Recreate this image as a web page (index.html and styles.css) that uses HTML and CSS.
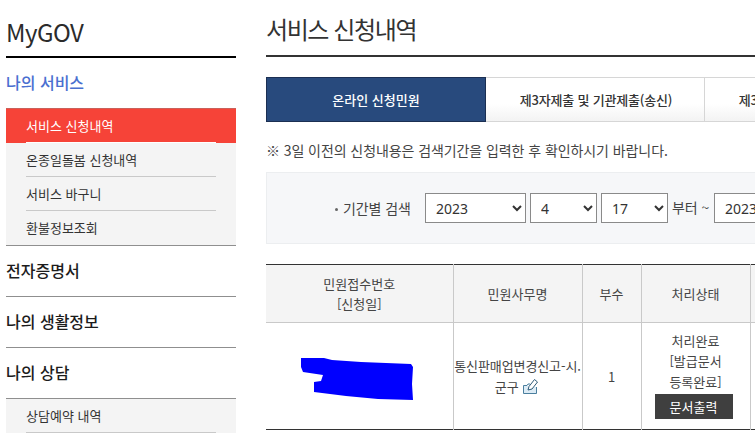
FILE: index.html
```html
<!DOCTYPE html>
<html lang="ko">
<head>
<meta charset="utf-8">
<title>MyGOV 서비스 신청내역</title>
<link rel="stylesheet" href="styles.css">
</head>
<body>
<div class="page">
  <aside class="side">
    <h1 class="brand">MyGOV</h1>
    <div class="sec sec-current">나의 서비스</div>
    <ul class="sub sub-first">
      <li class="sub-item active">서비스 신청내역</li>
      <li class="sub-item">온종일돌봄 신청내역</li>
      <li class="sub-item">서비스 바구니</li>
      <li class="sub-item last">환불정보조회</li>
    </ul>
    <div class="sec">전자증명서</div>
    <div class="sec">나의 생활정보</div>
    <div class="sec">나의 상담</div>
    <ul class="sub">
      <li class="sub-item">상담예약 내역</li>
    </ul>
  </aside>
  <main class="main">
    <h2 class="title">서비스 신청내역</h2>
    <div class="tabs">
      <div class="tab on">온라인 신청민원</div>
      <div class="tab">제3자제출 및 기관제출(송신)</div>
      <div class="tab">제3자제출 및 기관제출(수신)</div>
    </div>
    <p class="note">※ 3일 이전의 신청내용은 검색기간을 입력한 후 확인하시기 바랍니다.</p>
    <div class="search">
      <span class="search-label">기간별 검색</span>
      <select class="sel sel-y"><option>2023</option></select>
      <select class="sel sel-m"><option>4</option></select>
      <select class="sel sel-m"><option>17</option></select>
      <span class="search-text">부터 ~</span>
      <select class="sel sel-y"><option>2023</option></select>
    </div>
    <table class="grid">
      <colgroup>
        <col class="c1"><col class="c2"><col class="c3"><col class="c4"><col class="c5">
      </colgroup>
      <thead>
        <tr>
          <th>민원접수번호<br>[신청일]</th>
          <th>민원사무명</th>
          <th>부수</th>
          <th>처리상태</th>
          <th></th>
        </tr>
      </thead>
      <tbody>
        <tr>
          <td class="redact-cell">
            <svg class="redact" width="113" height="43" viewBox="0 0 113 43"><path d="M0 0 L23 0 L31 2 L60 4 L110 6 L112 9 L111 26 L112 42 L77 41 L45 38 L13 34 L13 24 L20 23 L22 17 L2 14 L0 9 Z" fill="#0000ff"/></svg>
          </td>
          <td class="name">통신판매업변경신고-시.군구 <svg class="edit" width="18" height="17" viewBox="0 0 18 17"><path d="M1.500 7.500 H5 L6 6 H8 M14.500 9 V15.500 H1.500 V7.500" fill="#dcebf5" stroke="#4a7f9e"/><path d="M6 12 L7 8.500 L12.500 1.500 L15.500 4 L10 11 Z" fill="#fff" stroke="#2c5a78"/></svg></td>
          <td>1</td>
          <td class="status">처리완료<br>[발급문서<br>등록완료]<span class="print">문서출력</span></td>
          <td></td>
        </tr>
      </tbody>
    </table>
  </main>
</div>
</body>
</html>
```
FILE: styles.css
```css
* { box-sizing: border-box; }
html, body { margin: 0; padding: 0; height: 100%; overflow: hidden; background: #fff; }
body { font-family: "Noto Sans CJK KR", "Noto Sans", sans-serif; color: #333; font-size: 13px; }
.page { display: flex; width: 755px; height: 434px; overflow: hidden; padding-left: 6px; }
.side { flex: 0 0 230px; width: 230px; margin-right: 30px; }
.brand { margin: 0; height: 58px; border-bottom: 2px solid #000; font-size: 24px; font-weight: 400; line-height: 64px; color: #2b2b2b; letter-spacing: -0.5px; }
.sec { height: 51px; line-height: 48px; font-size: 16px; font-weight: 500; color: #1c1c1c; border-bottom: 1px solid #8f8f8f; }
.sec-current { height: 50px; color: #4a6fd0; border-bottom: 0; }
.sub { list-style: none; margin: 0; padding: 0; background: #f4f4f4; }
.sub-first { border-bottom: 1px solid #8f8f8f; }
.sub-item { height: 34px; line-height: 34px; font-size: 13px; margin: 0; padding: 0 20px; position: relative; color: #333; }
.sub-item::after { content: ""; position: absolute; left: 20px; right: 20px; bottom: 0; height: 1px; background: #c9c9c9; }
.sub-item.last::after { display: none; }
.sub-item.active { background: #f64338; color: #fff; border-top: 1px solid #c9615a; height: 35px; }
.sub-item.active::after { background: #fff; }
.main { flex: 0 0 560px; width: 560px; }
.title { margin: 0; height: 57px; border-bottom: 2px solid #333; font-size: 24px; font-weight: 400; line-height: 58px; color: #333; letter-spacing: -1.4px; }
.tabs { display: flex; margin-top: 20px; height: 45px; }
.tab { flex: 0 0 219px; padding-left: 2px; display: flex; align-items: center; justify-content: center; white-space: nowrap; font-size: 13px; font-weight: 500; color: #333; letter-spacing: -0.2px; background: linear-gradient(#fff 60%, #f3f3f3); border: 1px solid #d6d6d6; border-left: 0; }
.tab.on { flex-basis: 220px; padding-left: 0; background: #284a7d; color: #fff; border: 1px solid #1b2f52; letter-spacing: 0; }
.note { margin: 0; height: 50px; padding-top: 18px; font-size: 14px; line-height: 20px; color: #444; white-space: nowrap; letter-spacing: -0.08px; }
.search { display: flex; align-items: center; gap: 4px; height: 72px; width: 560px; padding-left: 76px; background: #f6f7f9; border: 1px solid #eceef0; white-space: nowrap; color: #444; }
.search-label { font-size: 14px; width: 78px; position: relative; letter-spacing: -0.1px; }
.search-label::before { content: ""; position: absolute; left: -8px; top: 10px; width: 3px; height: 3px; border-radius: 50%; background: #666; }
.search-text { font-size: 14px; letter-spacing: -0.1px; width: 38px; margin-top: -3px; }
.sel { height: 30px; font-family: "Noto Sans", sans-serif; font-size: 14px; color: #333; background: #fff; border: 1px solid #8a8a8a; border-radius: 0; padding-left: 6px; margin: 0; }
.sel-y { width: 101px; }
.sel-m { width: 67px; }
.grid { margin-top: 20px; width: 560px; table-layout: fixed; border-collapse: collapse; border-top: 1px solid #333; border-bottom: 1px solid #333; }
.c1 { width: 187px; } .c2 { width: 129px; } .c3 { width: 59px; } .c4 { width: 109px; }
.grid th { height: 58px; font-weight: 400; font-size: 13px; line-height: 19.500px; background: #f4f4f4; color: #444; border-left: 1px solid #c9c9c9; border-bottom: 1px solid #c9c9c9; padding: 0; }
.grid td { height: 107px; font-size: 13px; line-height: 21px; text-align: center; color: #444; border-left: 1px solid #c9c9c9; padding: 0; }
.grid th:first-child, .grid td:first-child { border-left: 0; }
.redact { display: block; margin: 6px 0 0 35px; }
.name { letter-spacing: -0.1px; }
.edit { vertical-align: -3px; }
.grid .status { padding-bottom: 2px; line-height: 20.500px; }
.print { display: block; width: 78px; height: 25px; margin: 2px 0 0 13px; line-height: 25px; background: #3f3f3f; color: #fff; }
```
